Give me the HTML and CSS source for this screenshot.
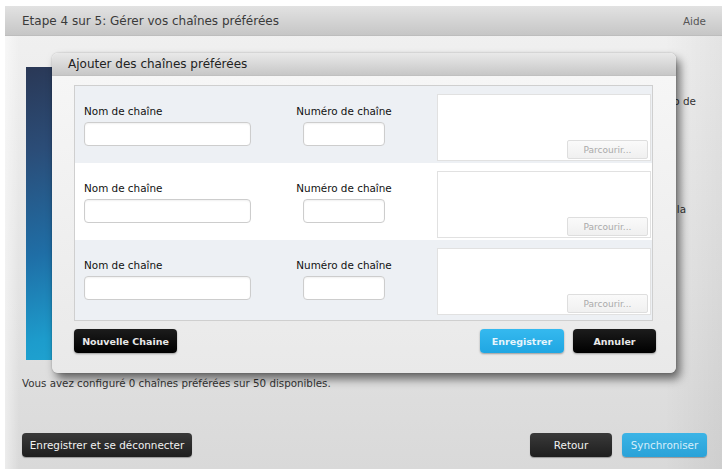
FILE: index.html
```html
<!DOCTYPE html>
<html lang="fr">
<head>
    <meta charset="UTF-8">
    <meta name="viewport" content="width=device-width, initial-scale=1.0">
    <title>Gérer vos chaînes préférées</title>
    <link rel="stylesheet" href="styles.css">
</head>
<body>
    <div class="app">
        <div class="topbar">
            <span class="step">Etape 4 sur 5: Gérer vos chaînes préférées</span>
            <span class="help">Aide</span>
        </div>

        <div class="content">
            <div class="intro">
                <div class="banner"></div>
                <div class="intro-text">
                    <p class="line1">Choisissez le nom, le numéro et le logo de</p>
                    <p class="line2">chaque chaîne que vous souhaitez voir dans la</p>
                </div>
            </div>

            <p class="status">Vous avez configuré 0 chaînes préférées sur 50 disponibles.</p>

            <div class="footer">
                <button type="button" class="btn dark wide">Enregistrer et se déconnecter</button>
                <div class="footer-right">
                    <button type="button" class="btn dark back">Retour</button>
                    <button type="button" class="btn blue sync">Synchroniser</button>
                </div>
            </div>

            <!-- fenêtre modale par-dessus la page -->
            <div class="modal">
                <div class="modal-title">Ajouter des chaînes préférées</div>
                <div class="modal-body">
                    <div class="channels">
                        <div class="channel">
                            <div class="field">
                                <label>Nom de chaîne</label>
                                <input type="text" class="name-input">
                            </div>
                            <div class="field center">
                                <label>Numéro de chaîne</label>
                                <input type="text" class="num-input">
                            </div>
                            <div class="logo-box">
                                <button type="button" class="browse">Parcourir...</button>
                            </div>
                        </div>
                        <div class="channel">
                            <div class="field">
                                <label>Nom de chaîne</label>
                                <input type="text" class="name-input">
                            </div>
                            <div class="field center">
                                <label>Numéro de chaîne</label>
                                <input type="text" class="num-input">
                            </div>
                            <div class="logo-box">
                                <button type="button" class="browse">Parcourir...</button>
                            </div>
                        </div>
                        <div class="channel">
                            <div class="field">
                                <label>Nom de chaîne</label>
                                <input type="text" class="name-input">
                            </div>
                            <div class="field center">
                                <label>Numéro de chaîne</label>
                                <input type="text" class="num-input">
                            </div>
                            <div class="logo-box">
                                <button type="button" class="browse">Parcourir...</button>
                            </div>
                        </div>
                    </div>

                    <div class="modal-footer">
                        <button type="button" class="mbtn black new">Nouvelle Chaine</button>
                        <div class="modal-actions">
                            <button type="button" class="mbtn cyan save">Enregistrer</button>
                            <button type="button" class="mbtn black cancel">Annuler</button>
                        </div>
                    </div>
                </div>
            </div>
        </div>
    </div>
</body>
</html>
```

FILE: styles.css
```css
body {
    margin: 0;
    background-color: #fff;
    font-family: "DejaVu Sans", Verdana, sans-serif;
    color: #222;
}

.app {
    margin: 6px 0 0 5px;
    width: 717px;
    height: 463px;
    display: flex;
    flex-direction: column;
    background: linear-gradient(to bottom, #f1f1f1 0%, #e4e4e4 60%, #d9d9d9 100%);
}

.topbar {
    height: 30px;
    padding: 0 16px 0 17px;
    display: flex;
    align-items: center;
    justify-content: space-between;
    background: linear-gradient(to bottom, #e2e2e2, #c6c6c6);
    border-bottom: 1px solid #bdbdbd;
    box-sizing: border-box;
}

.step {
    font-size: 12px;
    color: #3a3a3a;
}

.help {
    font-size: 10.4px;
    color: #555;
}

.content {
    flex: 1;
    position: relative;
    padding: 31px 15px 12px 17px;
    display: flex;
    flex-direction: column;
    background: linear-gradient(to right, rgba(255, 255, 255, 0.5) 0, rgba(255, 255, 255, 0) 14px, rgba(255, 255, 255, 0) 92%, rgba(0, 0, 0, 0.05) 100%);
}

.intro {
    height: 293px;
    padding-left: 4px;
    display: flex;
}

.banner {
    width: 200px;
    background: linear-gradient(165deg, #2a3856 0%, #2b4d78 25%, #1f6ea6 55%, #1d9ccc 80%, #22acd6 100%);
}

.intro-text {
    flex: 1;
    text-align: right;
    padding-right: 11px;
    font-size: 10.4px;
    color: #333;
}

.intro-text p {
    margin: 0;
    white-space: nowrap;
    line-height: 13px;
}

.line1 {
    margin-top: 28px !important;
}

.line2 {
    margin-top: 95px !important;
    padding-right: 10px;
}

.status {
    margin: 17px 0 0 0;
    font-size: 10.3px;
    line-height: 13px;
    color: #333;
}

.footer {
    margin-top: auto;
    display: flex;
    justify-content: space-between;
    align-items: center;
}

.footer-right {
    display: flex;
    gap: 10px;
}

.btn {
    height: 24px;
    border: none;
    border-radius: 4px;
    font-family: "DejaVu Sans", Verdana, sans-serif;
    font-size: 10.4px;
    padding: 0;
    box-shadow: 0 1px 1px rgba(0, 0, 0, 0.3);
}

.btn.dark {
    background: linear-gradient(to bottom, #3a3a3a, #1e1e1e);
    color: #f2f2f2;
}

.btn.blue {
    background: linear-gradient(to bottom, #3cb4e6, #2aa2d8);
    color: #d6eefa;
}

.wide {
    width: 170px;
}

.back {
    width: 82px;
}

.sync {
    width: 85px;
}

/* modale */
.modal {
    position: absolute;
    left: 47px;
    top: 17px;
    width: 624px;
    height: 320px;
    border-radius: 6px;
    background: linear-gradient(to bottom, #f7f7f7, #e9e9e9);
    box-shadow: 4px 6px 10px rgba(0, 0, 0, 0.55), 0 0 2px rgba(0, 0, 0, 0.25);
    overflow: hidden;
}

.modal-title {
    height: 23px;
    padding-left: 16px;
    display: flex;
    align-items: center;
    font-size: 12px;
    color: #222;
    background: linear-gradient(to bottom, #e9e9e9, #c7c7c7);
    border-bottom: 1px solid #c0c0c0;
    box-sizing: border-box;
}

.modal-body {
    padding: 9px 23px 0 22px;
}

.channels {
    border: 1px solid #cfcfcf;
    background-color: #edf0f4;
    padding-bottom: 3px;
    overflow: hidden;
}

.channel {
    height: 77px;
    display: grid;
    grid-template-columns: 170px 180px 1fr;
    padding-left: 9px;
    background-color: #edf0f4;
}

.channel:nth-child(2) {
    background-color: #fff;
}

.field {
    padding-top: 18px;
    display: flex;
    flex-direction: column;
}

.field.center {
    align-items: center;
}

.field label {
    font-size: 10.4px;
    line-height: 14px;
    color: #111;
}

.field input {
    margin-top: 4px;
    height: 24px;
    box-sizing: border-box;
    border: 1px solid #cdcdcd;
    border-radius: 4px;
    background-color: #fff;
    box-shadow: inset 0 1px 2px rgba(0, 0, 0, 0.06);
}

.name-input {
    width: 167px;
}

.num-input {
    width: 82px;
}

.logo-box {
    margin: 8px 1px 2px 3px;
    background-color: #fff;
    border: 1px solid #e1e1e1;
    display: flex;
    align-items: flex-end;
    justify-content: flex-end;
}

.browse {
    width: 81px;
    height: 19px;
    margin: 0 2px 1px 0;
    padding: 0;
    border: 1px solid #dedede;
    border-radius: 2px;
    background: linear-gradient(to bottom, #fafafa, #f0f0f0);
    font-family: "DejaVu Sans", Verdana, sans-serif;
    font-size: 9px;
    color: #aaa;
}

.modal-footer {
    margin: 8px -3px 0 0;
    display: flex;
    justify-content: space-between;
}

.modal-actions {
    display: flex;
    gap: 9px;
}

.mbtn {
    height: 24px;
    padding: 0;
    border: none;
    border-radius: 4px;
    font-family: "DejaVu Sans", Verdana, sans-serif;
    font-size: 9.5px;
    font-weight: bold;
    box-shadow: 0 1px 2px rgba(0, 0, 0, 0.35);
}

.mbtn.black {
    background: linear-gradient(to bottom, #1c1c1c, #000);
    color: #e8e8e8;
}

.mbtn.cyan {
    background: linear-gradient(to bottom, #35b9ef, #20a6e2);
    color: #e6f5fc;
}

.new {
    width: 103px;
}

.save {
    width: 84px;
}

.cancel {
    width: 83px;
}
```
